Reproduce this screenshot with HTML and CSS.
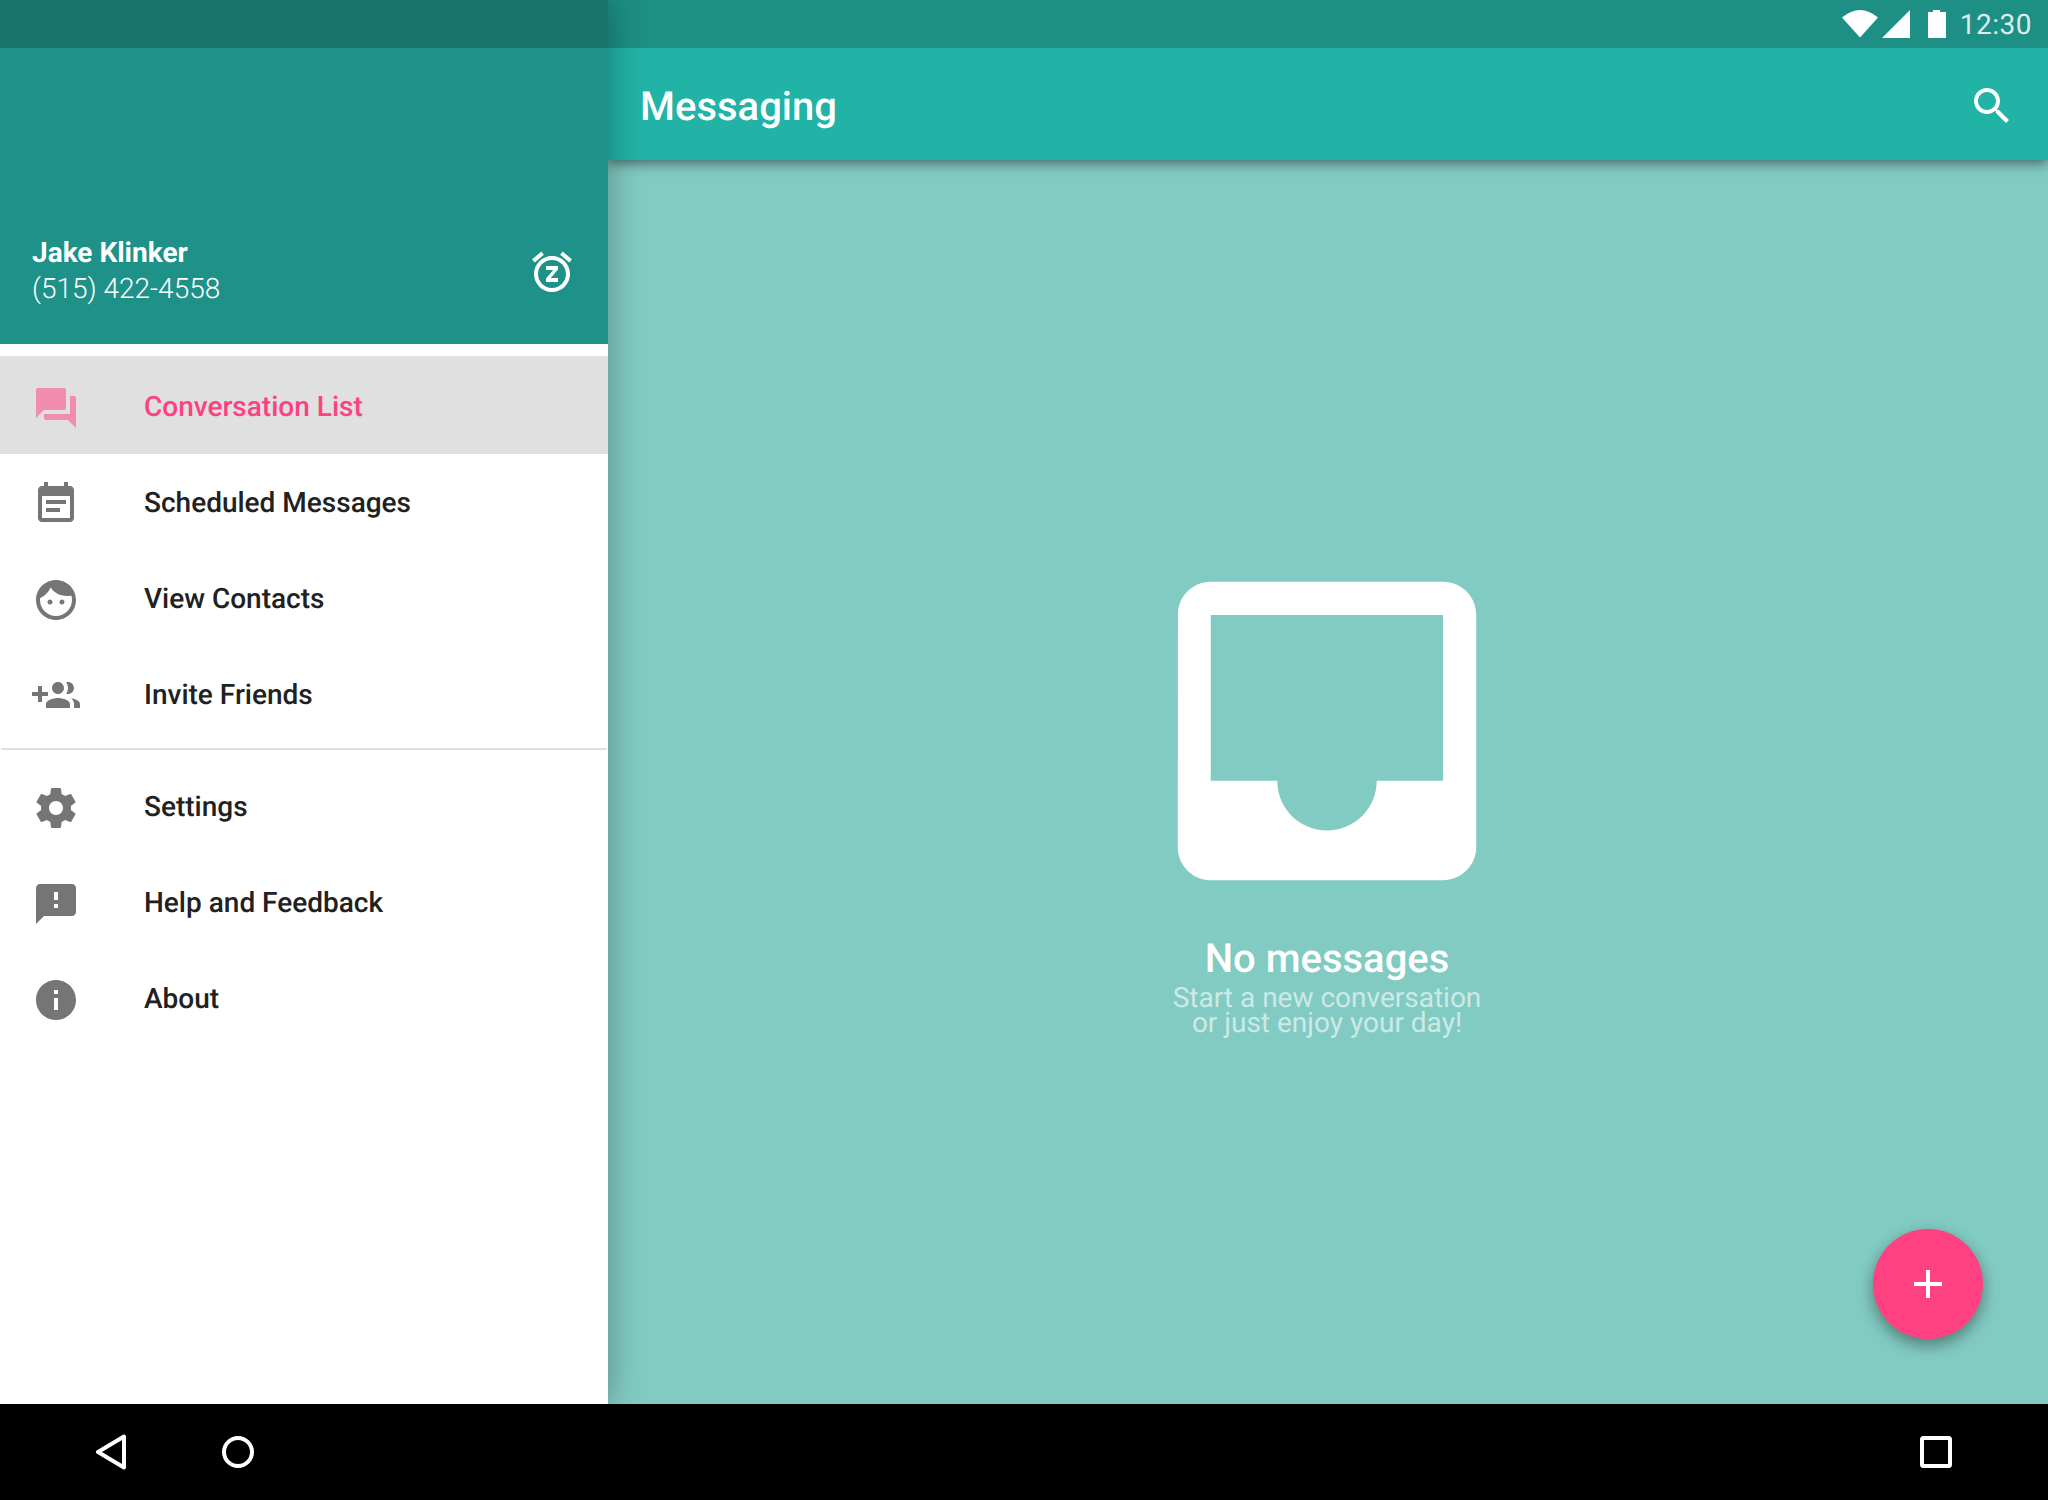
FILE: index.html
```html
<!DOCTYPE html>
<html lang="en">
<head>
<meta charset="utf-8">
<title>Messaging</title>
<link rel="stylesheet" href="styles.css">
</head>
<body>
<div class="screen">
  <div class="app">
    <aside class="drawer">
      <div class="drawer-status"></div>
      <header class="account">
        <div class="account-text">
          <div class="account-name">Jake Klinker</div>
          <div class="account-phone">(515) 422-4558</div>
        </div>
        <svg class="icon" viewBox="0 0 24 24"><path fill="#fff" d="M9 11h3.63L9 15.2V17h6v-2h-3.63L15 10.8V9H9v2zm7.056-7.654l1.282-1.535 4.607 3.85-1.28 1.54zM3.336 7.19l-1.28-1.536L6.662 1.81l1.28 1.536zM12 6c3.86 0 7 3.14 7 7s-3.14 7-7 7-7-3.14-7-7 3.14-7 7-7zm0-2c-4.97 0-9 4.03-9 9s4.03 9 9 9c4.97 0 9-4.03 9-9s-4.03-9-9-9z"/></svg>
      </header>
      <nav class="menu">
        <div class="row row-selected">
          <svg class="icon icon-pink" viewBox="0 0 24 24"><path d="M21 6h-2v9H6v2c0 .55.45 1 1 1h11l4 4V7c0-.55-.45-1-1-1zm-4 6V3c0-.55-.45-1-1-1H3c-.55 0-1 .45-1 1v14l4-4h10c.55 0 1-.45 1-1z"/></svg>
          <span class="row-label">Conversation List</span>
        </div>
        <div class="row">
          <svg class="icon" viewBox="0 0 24 24"><path d="M17 10H7v2h10v-2zm2-7h-1V1h-2v2H8V1H6v2H5c-1.11 0-1.99.9-1.99 2L3 19c0 1.1.89 2 2 2h14c1.1 0 2-.9 2-2V5c0-1.1-.9-2-2-2zm0 16H5V8h14v11zm-5-5H7v2h7v-2z"/></svg>
          <span class="row-label">Scheduled Messages</span>
        </div>
        <div class="row">
          <svg class="icon" viewBox="0 0 24 24"><path d="M9 11.75c-.69 0-1.25.56-1.25 1.25s.56 1.25 1.25 1.25 1.25-.56 1.25-1.25-.56-1.25-1.25-1.25zm6 0c-.69 0-1.25.56-1.25 1.25s.56 1.25 1.25 1.25 1.25-.56 1.25-1.25-.56-1.25-1.25-1.25zM12 2C6.48 2 2 6.48 2 12s4.48 10 10 10 10-4.48 10-10S17.52 2 12 2zm0 18c-4.41 0-8-3.59-8-8 0-.29.02-.58.05-.86 2.36-1.05 4.23-2.98 5.21-5.37C11.07 8.33 14.05 10 17.42 10c.78 0 1.53-.09 2.25-.26.21.71.33 1.47.33 2.26 0 4.41-3.59 8-8 8z"/></svg>
          <span class="row-label">View Contacts</span>
        </div>
        <div class="row">
          <svg class="icon" viewBox="0 0 24 24"><path d="M8 10H5V7H3v3H0v2h3v3h2v-3h3v-2zm10 1c1.66 0 2.99-1.34 2.99-3S19.66 5 18 5c-.32 0-.63.05-.91.14.57.81.9 1.79.9 2.86s-.34 2.04-.9 2.86c.28.09.59.14.91.14zm-5 0c1.66 0 2.99-1.34 2.99-3S14.66 5 13 5s-3 1.34-3 3 1.34 3 3 3zm6.62 2.16c.83.73 1.38 1.66 1.38 2.84v2h3v-2c0-1.54-2.37-2.49-4.38-2.84zM13 13c-2 0-6 1-6 3v2h12v-2c0-2-4-3-6-3z"/></svg>
          <span class="row-label">Invite Friends</span>
        </div>
        <div class="divider"></div>
        <div class="row">
          <svg class="icon" viewBox="0 0 24 24"><path d="M19.43 12.98c.04-.32.07-.64.07-.98s-.03-.66-.07-.98l2.11-1.65c.19-.15.24-.42.12-.64l-2-3.46c-.12-.22-.39-.3-.61-.22l-2.49 1c-.52-.4-1.08-.73-1.69-.98l-.38-2.65C14.46 2.18 14.25 2 14 2h-4c-.25 0-.46.18-.49.42l-.38 2.65c-.61.25-1.17.59-1.69.98l-2.49-1c-.23-.09-.49 0-.61.22l-2 3.46c-.13.22-.07.49.12.64l2.11 1.65c-.04.32-.07.65-.07.98s.03.66.07.98l-2.11 1.65c-.19.15-.24.42-.12.64l2 3.46c.12.22.39.3.61.22l2.49-1c.52.4 1.08.73 1.69.98l.38 2.65c.03.24.24.42.49.42h4c.25 0 .46-.18.49-.42l.38-2.65c.61-.25 1.17-.59 1.69-.98l2.49 1c.23.09.49 0 .61-.22l2-3.46c.12-.22.07-.49-.12-.64l-2.11-1.65zM12 15.5c-1.93 0-3.5-1.57-3.5-3.5s1.57-3.5 3.5-3.5 3.5 1.57 3.5 3.5-1.57 3.5-3.5 3.5z"/></svg>
          <span class="row-label">Settings</span>
        </div>
        <div class="row">
          <svg class="icon" viewBox="0 0 24 24"><path d="M20 2H4c-1.1 0-1.99.9-1.99 2L2 22l4-4h14c1.1 0 2-.9 2-2V4c0-1.1-.9-2-2-2zm-7 12h-2v-2h2v2zm0-4h-2V6h2v4z"/></svg>
          <span class="row-label">Help and Feedback</span>
        </div>
        <div class="row">
          <svg class="icon" viewBox="0 0 24 24"><path d="M12 2C6.48 2 2 6.48 2 12s4.48 10 10 10 10-4.48 10-10S17.52 2 12 2zm1 15h-2v-6h2v6zm0-8h-2V7h2v2z"/></svg>
          <span class="row-label">About</span>
        </div>
      </nav>
    </aside>
    <main class="main">
      <div class="status">
        <svg class="status-wifi" viewBox="0 0 36 28"><path d="M18 27.5L0 7.5Q18 -7.5 36 7.5Z"/></svg>
        <svg class="status-signal" viewBox="0 0 28 28"><path d="M0 28L28 0V28Z"/></svg>
        <svg class="status-battery" viewBox="0 0 18 28"><path d="M0 2H5V0H12V2H18V28H0Z"/></svg>
        <span class="status-time">12:30</span>
      </div>
      <div class="toolbar">
        <span class="toolbar-title">Messaging</span>
        <svg class="icon" viewBox="0 0 24 24"><path fill="#fff" d="M15.5 14h-.79l-.28-.27C15.41 12.59 16 11.11 16 9.5 16 5.91 13.09 3 9.5 3S3 5.91 3 9.5 5.91 16 9.5 16c1.61 0 3.09-.59 4.23-1.57l.27.28v.79l5 4.99L20.49 19l-4.99-5zm-6 0C7.01 14 5 11.99 5 9.5S7.01 5 9.5 5 14 7.01 14 9.5 11.99 14 9.5 14z"/></svg>
      </div>
      <section class="content">
        <svg class="empty-icon" viewBox="0 0 24 24"><path d="M19 3H4.99c-1.11 0-1.98.89-1.98 2L3 19c0 1.1.88 2 1.99 2H19c1.1 0 2-.9 2-2V5c0-1.11-.9-2-2-2zm0 12h-4c0 1.66-1.35 3-3 3s-3-1.34-3-3H4.99V5H19v10z"/></svg>
        <div class="empty-title">No messages</div>
        <div class="empty-sub">Start a new conversation<br>or just enjoy your day!</div>
        <div class="fab"><svg class="fab-plus" viewBox="0 0 28 28"><path d="M12 0h4v12h12v4H16v12h-4V16H0v-4h12z"/></svg></div>
      </section>
    </main>
  </div>
  <footer class="navbar">
    <div class="nav-left">
      <svg class="nav-back" viewBox="0 0 30 36"><path d="M28 2.5V33.5L2 18Z"/></svg>
      <svg class="nav-home" viewBox="0 0 32 32"><circle cx="16" cy="16" r="14"/></svg>
    </div>
    <svg class="nav-recent" viewBox="0 0 32 32"><rect x="2" y="2" width="28" height="28" rx="1.5"/></svg>
  </footer>
</div>
</body>
</html>
```
FILE: styles.css
```css
* { box-sizing: border-box; }
html, body { margin: 0; padding: 0; }
body { width: 2048px; height: 1500px; overflow: hidden; font-family: Roboto, "Liberation Sans", sans-serif; text-rendering: geometricPrecision; }
.screen { width: 2048px; height: 1500px; display: flex; flex-direction: column; overflow: hidden; }
.app { display: flex; height: 1404px; }
.icon { width: 48px; height: 48px; flex: none; display: block; fill: #757575; }
.icon-pink { fill: #ff4081; opacity: .52; }

.drawer { width: 608px; flex: none; background: #fff; display: flex; flex-direction: column; position: relative; z-index: 3; box-shadow: 0 0 34px rgba(0,0,0,.32); }
.drawer-status { height: 48px; background: #18746c; }
.account { height: 296px; background: #1e9188; color: #fff; display: flex; align-items: flex-end; justify-content: space-between; padding: 0 32px 48px; }
.account-text { margin-bottom: -10px; }
.account-name { font-size: 28px; font-weight: 700; line-height: 35px; margin-top: -2px; padding-bottom: 1px; }
.account-phone { font-size: 28px; font-weight: 300; line-height: 35px; }

.menu { padding-top: 12px; }
.row { height: 96px; display: flex; align-items: center; padding-left: 32px; gap: 64px; }
.row-selected { height: 98px; padding-top: 6px; margin-bottom: 2px; background: #e0e0e0; }
.row-label { font-size: 28px; font-weight: 500; color: #212121; padding-bottom: 4px; }
.row-selected .row-label { color: #ff4081; }
.divider { height: 2px; margin: 4px 1px 10px; background: #e0e0e0; }

.main { flex: 1; display: flex; flex-direction: column; min-width: 0; }
.status { height: 48px; background: #1d8f85; display: flex; align-items: center; justify-content: flex-end; padding-right: 16px; position: relative; z-index: 2; }
.status svg { display: block; fill: #fff; height: 28px; }
.status-wifi { width: 36px; margin-right: 4px; }
.status-signal { width: 28px; margin-right: 18px; }
.status-battery { width: 18px; margin-right: 14px; }
.status-time { font-size: 28px; letter-spacing: .5px; color: rgba(255,255,255,.85); }
.toolbar { height: 112px; background: #21b3a6; display: flex; align-items: center; justify-content: space-between; padding: 4px 32px 0; position: relative; z-index: 1; box-shadow: 0 3px 12px rgba(0,0,0,.5); }
.toolbar-title { font-size: 40px; font-weight: 500; color: #fff; }

.content { flex: 1; background: #82cbc3; position: relative; display: flex; flex-direction: column; align-items: center; padding-top: 372px; padding-right: 2px; }
.empty-icon { width: 398px; height: 398px; display: block; fill: #fff; }
.empty-title { font-size: 40px; font-weight: 500; line-height: 48px; color: #fff; margin-top: 5px; }
.empty-sub { font-size: 28px; font-weight: 400; line-height: 24.5px; color: rgba(255,255,255,.6); text-align: center; margin-top: 3px; }
.fab { position: absolute; right: 65px; bottom: 65px; width: 110px; height: 110px; border-radius: 50%; background: #ff4081; display: flex; align-items: center; justify-content: center; box-shadow: 0 6px 16px rgba(0,0,0,.4); }
.fab-plus { width: 28px; height: 28px; fill: #fff; display: block; }

.navbar { height: 96px; background: #000; display: flex; align-items: center; justify-content: space-between; padding: 0 96px; position: relative; z-index: 4; }
.nav-left { display: flex; align-items: center; gap: 96px; }
.navbar svg { display: block; fill: none; stroke: #fff; stroke-width: 4; stroke-linejoin: round; }
.nav-back { width: 30px; height: 36px; }
.nav-home { width: 32px; height: 32px; }
.nav-recent { width: 32px; height: 32px; }
```
